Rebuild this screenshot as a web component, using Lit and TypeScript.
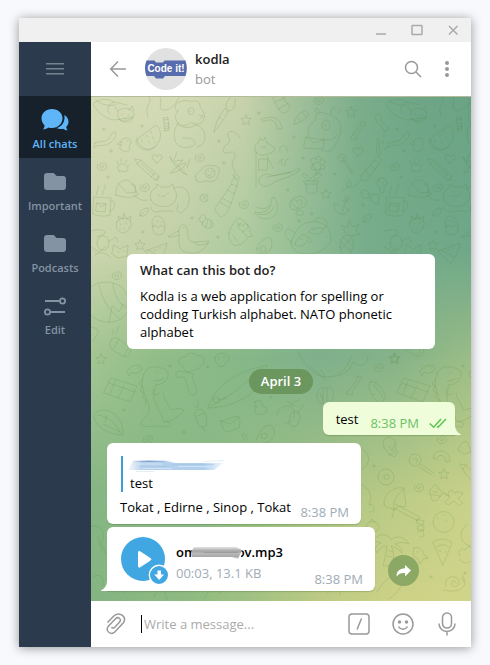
import { LitElement, html, svg, css } from "lit";
import { customElement } from "lit/decorators.js";

/* Small repeated doodles: star, heart, spiral, dot, bone, candy, leaf */
const STAR = "M0-5l1.5 3.2 3.6.4-2.7 2.5.8 3.6L0 3l-3.2 1.7.8-3.6-2.7-2.5 3.6-.4z";
const HEART = "M0 4C-4 1-6-1-4.500-3.500-3-5-.5-4 0-2 .5-4 3-5 4.500-3.500 6-1 4 1 0 4z";
const SPIRAL = "M0 0c1-1 2 0 1.500 1C0 3-3 1-2-1-1-4 4-4 4.500 0 5 4-1 6-4 3-5 2-5 0-4-2";
const DOT = "M-1.200 0a1.200 1.200 0 1 0 2.400 0a1.200 1.200 0 1 0-2.400 0";
const LEAF = "M-4 4C-5-1-1-4 4-4 5 1 1 5-4 4L1-1";
const BONE = "M-4 5L4-5C2-8 5-10 6-8 9-9 10-6 7-5L-1 7C1 10-2 11-4 9-6 11-8 7-4 5z";

const SMALL: Array<[string, number, number]> = [
  [STAR, 49, 148], [STAR, 155, 23], [STAR, 260, 15], [STAR, 235, 97], [STAR, 10, 262], [STAR, 304, 261],
  [STAR, 353, 377], [STAR, 258, 377], [STAR, 61, 377],
  [HEART, 66, 62], [HEART, 267, 55], [HEART, 206, 107], [HEART, 152, 131],
  [SPIRAL, 11, 69], [SPIRAL, 109, 60], [SPIRAL, 54, 90], [SPIRAL, 153, 107], [SPIRAL, 187, 130],
  [SPIRAL, 228, 3], [SPIRAL, 26, 178], [SPIRAL, 57, 342], [SPIRAL, 288, 270], [SPIRAL, 351, 342], [SPIRAL, 328, 390],
  [DOT, 51, 29], [DOT, 128, 44], [DOT, 20, 54], [DOT, 17, 80], [DOT, 133, 66], [DOT, 101, 121], [DOT, 52, 135],
  [DOT, 127, 140], [DOT, 168, 16], [DOT, 203, 40], [DOT, 212, 61], [DOT, 244, 77], [DOT, 197, 93], [DOT, 221, 117],
  [DOT, 208, 124], [DOT, 272, 108], [DOT, 13, 32], [DOT, 33, 313], [DOT, 79, 269], [DOT, 93, 335], [DOT, 117, 270],
  [DOT, 283, 369], [DOT, 76, 376], [DOT, 180, 300], [DOT, 340, 480], [DOT, 374, 476],
  [LEAF, 53, 115], [LEAF, 276, 121],
  [BONE, 266, 33], [BONE, 262, 288],
];

const DOODLES: string[] = [
  /* sleeping fox */
  "M3 6C8 2 17 1 23 5L36 8M2 7C6 15 14 22 24 23L42 20C37 24 30 26 28 22M5 3C10 8 18 9 25 8M23 5c-6 2-8 8-4 12M27 14c5-5 14-3 16 3l-2 6c-5 4-12 2-14-3zM27 14l-3-4M38 13l3-4 2 5M31 17h1M37 18h1M33 21l2 1",
  "M58 0c3 4-1 7-2 11-1 4 2 7 0 9",
  "M69 0c3 7-3 12 3 13s12-4 16-13",
  /* wavy scarf and chick */
  "M4 46c6-3 10 1 15-6 2-4 5-8 6-3 0 5-6 10-11 11-5 1-9 0-10 2s-2 0 0-4z",
  "M30 45c0-5 9-6 10 0 0 3-3 4-2 5 4 5-8 6-9 1-1-3 3-3 1-6zm-1 0l-3 2 4 1M36 44h1",
  /* watermelon */
  "M46 42L65 28c8 6 5 21-6 24-6 1-12-4-13-10zM45 43c1 10 13 14 20 6M60 34v2M62 40v2M56 38v2M51 43v2M58 44v2M64 45v1",
  /* candy */
  "M73 23l4-1 1 9-4 1zM73 23l-1-2 5-1v2M74 32l-1 2 5-1v-2M74 26l4 1M74 29l4 1",
  /* puppy */
  "M87 14c-5-1-3-9 2-9 3-2 9-2 12 0 3-3 9 0 8 5 4 4 6 10 3 14-2 4-9 4-12 1-3 4-9 5-13 1-4-5-3-9 0-12zM87 26c-4 6-5 14-2 20 4 6 15 6 19 1 0-7-8-6-13-6M104 28c5 0 10 5 10 12 0 6-3 9-8 10M97 14a3 3.500 0 1 0 6 0a3 3.500 0 1 0-6 0M99 14h1M108 18l4 1-3 3M86 27c6 4 13 5 18 1",
  /* paint brush */
  "M123 35c2-9 5-18 12-24l2 3c-3 8-9 15-14 21zM135 11c-1-7 4-9 7-14M137 14c6 0 8-6 7-12M128 20l2 2",
  /* paw */
  "M28 74c-3-4 0-7 3-7s8 3 5 7c-2 2-6-1-8 0zM27 67l-1-3M30 65v-3M34 66l2-3M37 69l2-1",
  /* pencil */
  "M44 62l6 1 18 16-4 4L47 68zM50 63l-4 4M64 76l-4 4M68 79l-1 4-3 0M50 66l13 12",
  /* aeroplane */
  "M79 60c2 4 10 10 17 18-7-3-14-10-17-18zM80 75c5-5 11-9 15-9-2 5-8 9-15 10zM83 63l3-8M96 71l3-9M84 64l8-1-5 5",
  /* fried egg */
  "M105 83c-3-7 4-7 6-11 4-6 10-3 14-3 5 2 3 7 2 10-1 5-6 6-11 5-4 0-9 3-11-1zM114 76a5 5 0 1 0 10 0a5 5 0 1 0-10 0M116 77c1 3 4 2 5-1M117 74h1M121 74h1",
  /* curled snake */
  "M149 41c-5-9-14-8-12-2 2 5 2 6-2 9-3 3-5 9 1 8 6-2 9-1 8 4-2 4-4 8-2 11 2 4 3 5 1 9M141 78l7 5M146 77l3 5",
  /* mouse */
  "M25 98c-1-9 4-14 10-15 5 0 9 7 12 15-7 4-16 2-22 0zM27 86l9 10 9-1M41 87c5-1 4 9 2 10M43 98c6 5 8 6 13 5",
  /* cat */
  "M60 103c-2-6 1-11 5-12l1-4 4 3h8l4-3 1 5c5 6 2 13-3 16-6 3-17 2-20-5zM83 91c7-3 14 0 15 8 1 8-2 13-8 17l-4-2 1-7M60 110c-1 5 7 6 10 4h12M67 98l2 1M76 97l2-1M71 99l2 1 1-2",
  /* bottle */
  "M125 115c-3-3 2-8 4-11 3-5 8-10 11-17l6 2c-3 8-4 13-7 20-2 5-4 9-9 11zM140 86l3-5 4 3-1 5M131 101l9 5M129 105l8 5M136 93l8 4",
  /* mug */
  "M3 100l17 1-1 17c-5 2-13 1-17-1zM20 104c4-3 6 9-1 10M6 106l9 1-1 8-9-1zM6 106l4 4 5-3M6 98c-2-4 3-5 1-9M12 98c-2-4 4-6 2-11",
  /* strawberry */
  "M26 125c2-5 11-5 14 0 1 5-2 9-7 11-7-1-9-6-7-11zM28 123l-1-4 5 3 1-6 3 6 4-3-1 5M30 127v1M35 126v1M33 131v1M38 130v1M29 131v1",
  /* hatching chick */
  "M62 129c-3-5 1-10 5-10s7 6 7 11c0 5-2 8-7 8-5-1-6-6-5-9zM62 130l3-2 2 3 3-3 4 3M66 124h1M70 125h1",
  /* bee, ball */
  "M109 101a4 4 0 1 0 8 0a4 4 0 1 0-8 0M111 98l5 6M116 98l-5 5",
  "M109 121c1-6 7-3 5 1 5-1 9 3 8 7-5 5-10 1-11-4-5-1-4-4-2-4zM113 123l-2 5M117 123l-2 7M120 124v6",
  /* duck */
  "M88 138c-1-5 0-10 4-10 5 0 4 5 5 9 0 5 1 8 6 8l15-1c-3 6-7 11-14 12-8 1-16-2-16-9zM88 134c-4 1-9 4-11 6 4 0 8-1 11-2M103 145c4 5 9 3 14 1M92 131h1",
  /* fish with hearts */
  "M138 136c2-8 8-15 11-15 6 5 11 9 10 14l3 4-5 1c-3 6-10 10-15 8-3-4-5-8-4-12zM142 138l4 6M146 125l3 4M152 136l4 3",
  /* monkey and kittens */
  "M1 134c8-3 16 0 12 3l-7 3M6 146a5 6 0 1 0 12 0a5 6 0 1 0-12 0M0 150l8 5 6-5M23 148l6 4 8-4-1 11-9 2-6-4zM4 158c5-4 12-2 15 2M18 144l7-4 2 5M27 155h1M33 154h1",
  /* pizza */
  "M54 154l22-8c-1 6-4 14-9 20zM57 153l13 7M63 153h2M68 151h2",
  /* barrel */
  "M182 0c2 7 5 12 9 16 4 0 8-3 8-7-4-3-6-7-7-10M184 5l10-4M187 12l11-6",
  /* rainbow */
  "M172 25c8-5 14-1 14 7l5 0c-1-12-11-14-20-10z",
  /* marker */
  "M203 27c1-6 6-12 11-14l4 4c-3 5-8 9-15 10zM211 15l4 5M207 21l3 4",
  /* dog with letter */
  "M218 39c-3-6 1-12 6-15 1-4 2-8 4-9 6 1 18 4 21 11 3 6-1 19-8 25M226 17c-3-5-1-7 1-5l2 4M240 17c-1-6 2-8 4-5M231 28a4 5 0 1 0 8 0a4 5 0 1 0-8 0M215 40l18 3-1 9-19-1zM215 40l8 6 10-3M232 42c6 2 12 0 14-4M230 53c8 3 14 0 15-4M247 16l2-3M234 27v2",
  /* swirl */
  "M285 18c4-4 6 1 5 5 0 4 7 4 7 10l-4 2c1-5-7-7-8-12z",
  "M286 42c4-1 3 5 2 9l2 6-3 1c-4-6 1-10-1-16zM293 37v4M292 44v3M294 51v2",
  /* llama with guitar */
  "M165 55c-3-4 0-9 3-10l1-4 3 3 2-4 2 6 7 4c2 4-3 7-7 7-3 2-7 2-11-2zM165 55v35M176 59l6 12M168 62h9l-1 11h-8zM168 84c1-8 10-8 13-5l16-3c8-3 10-5 12-4-1 4-9 6-12 8l-14 5c-5 6-15 6-15-1zM176 80l24-5M170 50h5",
  /* notes */
  "M189 55c-2-8 8-9 7 0M188 66c2-6 6-5 2-1l1 3M194 69c-1-8 4-6 4-8",
  /* flower pot */
  "M222 69a4 4 0 1 0 8 0a4 4 0 1 0-8 0M222 67c-6-5 1-8 3-4 0-6 6-5 4 1 5-4 7 2 2 4 6 1 2 7-2 3 1 6-5 6-4 1-5 3-7-2-3-5zM226 75l-4 10M213 84h15l-2 3h-12zM215 87l1 8c3 2 7 2 10 0v-8M218 84c-8-5-8-9-4-7l6 5c2-6 10-6 11-4l-7 6",
  /* lollipop */
  "M247 61a4 4 0 1 0 8 0a4 4 0 1 0-8 0M250 61c3-4 4 4 1 3M253 65l8 12M255 64l7 12",
  /* firecracker */
  "M270 79l17-20 4 4-15 20c-4 2-7 0-6-4zM275 73l4 6M280 68l4 5M284 63l4 4M270 83c-4 6-9 8-14 7-2-5 3-8 4-4 1 3-5 7-9 8",
  /* mushroom */
  "M286 88c-2-6 5-10 9-5 3 4 1 6-2 6v6c-3 2-5 0-4-5zM288 82v3M292 85v2",
  /* bananas */
  "M181 101l-2 9c-4 5-10 7-15 5 2 8 15 9 20 3 4-5 3-10 0-17zM179 108c-3 4-8 5-14 2M183 110c-3 7-10 9-16 7",
  /* thought bubble */
  "M199 109c-2-8 9-12 15-8 4 3 1 9-4 10-5 3-10 2-11-2zM205 116a4 2.500 0 1 0 8 0a4 2.500 0 1 0-8 0",
  /* anchor */
  "M254 101a2 2 0 1 0 4 0a2 2 0 1 0-4 0M255 103l-4 13M251 103l7 2M243 107c0 10 10 14 15 6M243 107l4 1M258 113l-3-2",
  /* bow */
  "M271 93c5-1 7 3 8 5 3-1 6-1 9 0l-1 9c-4 0-7-3-8-6-3 1-7 0-8-2zM277 98l4 3",
  /* panda */
  "M200 145c4-11 10-20 21-20 11-2 19 7 19 16 0 10-11 13-18 16-12 1-21-2-22-12zM201 145c-8-4-9-12-3-13l5 3M224 124c-1-5 11-5 12 2 0 4-1 5-3 5M204 147c1-7 10-13 13-6 0 6-9 12-13 6zM218 135c2-6 14-5 15-2-4 4-10 6-15 2zM209 142h2M222 133h2M218 140l2 1M221 144l-3 2",
  /* avocado */
  "M166 152c1-6 6-10 12-12 4 2 4 12-1 15-5 4-12 2-11-3zM169 152a3 3 0 1 0 6 0a3 3 0 1 0-6 0",
  /* pineapple */
  "M249 150c0-6 3-12 7-12 5-1 8 6 6 12-2 6-4 8-7 8s-6-3-6-8zM250 145l10 10M252 140l10 9M260 141l-10 11M255 137l-5-9 6 3 2-8 4 7 6-3-3 7 4 3-9 2",
  /* beach ball */
  "M0 190c8-7 25-7 33 3 7 9 6 24-3 29-11 6-24 3-30-4M8 188c3 13 8 24 20 33M22 186c1 12 5 19 13 26M18 226l3-17 7 6 4-8 8 7 4-8 2 16",
  /* flashlight */
  "M20 243c4-3 6-3 9 0l10 8c2 3-1 8-5 9l-11-6c-4-2-5-8-3-11zM28 242l-6 10M38 250l-5 9M22 233v4M28 229l-3 7M0 230c12 2 6 8 2 14",
  /* seeds, fish */
  "M37 273c3-4 9-6 13-4l1 3c-3 5-8 5-11 3l-2 4-2-4zM47 271h1",
  /* dinosaur */
  "M53 277c2-7 10-9 17-6 5 0 8 4 7 8-1 6-8 9-13 9 1 9-4 9 1 19 3 6 6 13 8 18M53 277c-5 12 2 22 5 32 3 10-9 12-8 19 5 3 12 1 16 1l12 1c3-3 1-5-3-6M73 325c8 0 18-8 20-12-7-4-13 2-14-1-3-8-6-9-7-16M63 292c-3 4 0 9 5 4M66 276h1M63 284c4 0 8-1 10-3M51 283l-3 4 3 2-2 5 4 2-2 4 4 3-1 5",
  /* chef hat and brush */
  "M90 268c-5-3-1-9 4-8 2-5 10-5 12-1 7-3 10 8 4 10-2 4-7 3-8 5l-7 1-3-5zM90 280c-5 3-8-6-1-6l14 3-2 3 5 14c0 4-7 6-8 1l-4-14z",
  /* mushroom */
  "M124 261c2-7 13-6 14 0 0 4-3 3-4 5 1 4-6 5-7 1-2-2-4-2-3-6zM128 260v2M133 259v2",
  /* surfboard */
  "M117 311c5-18 22-35 59-43-2 20-22 42-59 43zM120 309c19-9 36-24 52-39M127 303l8-2M122 303a3 3 0 1 0 6 0a3 3 0 1 0-6 0",
  /* picture */
  "M20 281l26 8-7 16-26-9zM18 286l26 9M24 284l-5 13M33 289l-6 12",
  /* pizza slice */
  "M3 320c0-7 8-8 15-6 9 3 15 13 14 24-12 0-22-5-27-13zM7 318c10 1 19 9 22 18M16 318l-2 7M12 327l18 8",
  /* rocket pop */
  "M103 316c3-6 10-4 12 2l1 10c-3 3-7 2-9-1zM111 330l3 5M103 308l3 3M107 305v5M106 319l8-3",
  /* chick, letter */
  "M164 305c3-3 8-1 7 3 2 4 7 1 4 7-4 4-13 3-11-3 3-2 0-4 0-7zM162 309l3 1",
  "M130 324l13-4c5-2 6 1 6 5l-1 6-13 4c-3-3-5-6-5-11zM130 324l9 3 9-7",
  /* small eggs and pod */
  "M186 318c0-8 11-12 16-6 4 6 0 15-8 14M154 344l-3-6c2-3 5 1 5 5M165 344c2-7 9-19 16-15 6 6 0 17-8 17M170 339a3 3 0 1 0 6 0a3 3 0 1 0-6 0",
  /* mermaid tail */
  "M207 255c7 13 16 24 27 25 17-1 24-4 28-15 8 6 14 4 15-6M220 270l15 13M234 280l-4-7M247 277c8-4 11-13 14-19",
  /* shell */
  "M227 303c-4-8 3-15 9-12 7-3 8 7 5 12l-3 4h-7zM232 292v13M236 291v14M229 296l3 8",
  /* rocket */
  "M279 285c7-2 13 7 16 16l-6 5c-7-4-14-14-10-21zM283 288l10 14M291 306l4 3M284 297l-3 1",
  /* palm sprout */
  "M199 320a5 6 0 1 0 9 4a5 6 0 1 0-9-4M200 309c2-7 8-4 9-7M207 317l6-10M196 304l7 5",
  /* light bulb */
  "M293 350c-3-7 3-12 8-9 5 2 3 8 4 13l-6 4zM298 357l6 3 3-6M298 349l3 5 2-6",
  /* lollipop on the right */
  "M318 363a6 6 0 1 0 12 0a6 6 0 1 0-12 0M322 363c2-5 7 0 3 3M329 367l14 9M328 370l13 8",
  /* arch */
  "M342 361c1-9 16-11 17 3l-4 1c-1-9-8-8-9-3z",
  /* ring and onion */
  "M287 380a8 8 0 1 0 16 0a8 8 0 1 0-16 0M293 380a2.500 2.500 0 1 0 5 0a2.500 2.500 0 1 0-5 0",
  "M271 352c9 5 9 15 0 20M271 388c11 5 9 15 7 20 7-2 7 8 1 7",
  /* umbrella */
  "M293 407c-1-10 9-18 20-16-1 6 3 12 1 19-6-2-9 1-11 3-5-3-10-2-10-6zM303 413c-2-9 4-16 10-22M301 421l2-8M304 407l25 13-2 4-24-13",
  /* muffin */
  "M339 397c-2-5 3-6 4-9 2-1 5 2 4 4 5 1 5 5 3 7zM339 397l2 6c4 2 7 0 8-4M342 395h5",
  /* gingerbread */
  "M358 399c-3-5 3-8 5-3 4-2 7-1 9 0-1 4-4 4-5 5l5 5-4 3-5-5-6 4-3-3 5-5-6-4z",
  /* crayon */
  "M369 367l6 1 10 11v8l-9-8zM375 368l-4 5M367 353c2-7 7-11 10-7l3 9-6 2z",
  /* bowling ball */
  "M342 425a10.500 10.500 0 1 0 21 0a10.500 10.500 0 1 0-21 0M346 421h1M352 418h1M355 424h1",
  /* tomato */
  "M275 430c0-7 12-8 13 0 0 6-11 7-13 0zM278 425l3-3 3 4",
  /* palm tree */
  "M283 443c5-8 15-6 17 0 6-6 15-2 18 4-6-2-10-2-14 0 5 2 7 6 7 9-5-5-8-6-11-7 4 6 3 14 0 20h-8c2-8 3-14 4-20-5 0-8 3-10 7-3-5-1-8 4-10-4-2-7-2-10-1zM297 453l5 2M296 459l5 1",
  /* small fish */
  "M323 451c4-3 9 2 10 7l4 3-5 1-3 5-2-5c-5-2-6-6-4-11zM326 455h1",
  /* pizza on the right */
  "M342 445c5-4 15-4 19 1l-9 22zM345 450c5-3 9-3 13 0M348 454h2M354 455h1",
  /* moon and cloud */
  "M376 428c-11 7-6 21 5 21M369 459c-4-6 3-9 5-6 3-7 10-1 7 3M369 462c2 5 8 5 11 2",
  /* snail */
  "M352 493c10 2 18 2 22-6l-3-6M355 489c-3-8 7-12 12-7 4 6-3 10-6 6-2-4 3-6 4-2M374 485l-2-6",
  /* streamer */
  "M326 422l7 2-1 4-6-2zM327 429h6v4h-6zM327 435l5-2 1 6-4 1",
  /* crab and tentacles near the bottom edge */
  "M0 430c10-5 16 8 10 15l5 12M7 440l4 14M2 480c8-6 13 4 9 9M15 491c7-4 12-3 18 5M63 500c3-10 12-8 13 2M114 501c5-12 10-10 16-4M236 497c6-10 14-6 13 1M286 495c6-12 15-14 22-26l8 4c-1 12-10 24-18 29",
];

@customElement("chat-wallpaper")
class ChatWallpaper extends LitElement {
  static styles = css`
    :host { display: block; overflow: hidden; }
    .tone, .doodles { position: absolute; inset: 0; width: 100%; height: 100%; }
    .t5 { background: linear-gradient(90deg, #84b582, #8ebb82 25%, #a1c283 42%, #bfcb85 62%, #cdd287 80%, #d1d58b); }
    .t4 {
      background: linear-gradient(90deg, #85b683, #8ab985 30%, #9bbf85 50%, #b4c885 72%, #c9d189);
      mask-image: linear-gradient(#000 79%, transparent);
    }
    .t3 {
      background: linear-gradient(90deg, #a3c592, #90bd88 17%, #86b788 40%, #7fb08b 60%, #86b389 80%, #9bbd86);
      mask-image: linear-gradient(#000 52%, transparent 79%);
    }
    .t2 {
      background: linear-gradient(90deg, #cbd5ac, #c3d1a8 20%, #adcba0 40%, #98c097 53%, #78ad8b 72%, #6fa889);
      mask-image: linear-gradient(#000 31%, transparent 52%);
    }
    .t1 {
      background: linear-gradient(90deg, #d4dab5, #d3dab5 22%, #c8d2ab 40%, #a2c09b 54%, #7dad8b 70%, #6fa687 85%, #6aa385);
      mask-image: linear-gradient(#000, transparent 31%);
    }
    .doodles { fill: none; stroke: #4c7a30; stroke-opacity: 0.17; stroke-width: 1; stroke-linecap: round; stroke-linejoin: round; }
  `;
  render() {
    return html`
      <div class="tone t5"></div><div class="tone t4"></div><div class="tone t3"></div>
      <div class="tone t2"></div><div class="tone t1"></div>
      <svg class="doodles" viewBox="0 0 380 505" preserveAspectRatio="xMinYMin slice" aria-hidden="true">
        <g id="tile">
          ${DOODLES.map((d) => svg`<path d=${d} />`)}
          ${SMALL.map(([d, x, y]) => svg`<path d=${d} transform="translate(${x} ${y})" />`)}
        </g>
        <svg x="293" y="0" width="87" height="335" viewBox="0 0 87 335"><use href="#tile" /></svg>
      </svg>`;
  }
}

@customElement("app-root")
class AppRoot extends LitElement {
  static styles = css`
    :host {
      display: flex; box-sizing: border-box; min-height: 100vh; padding: 18px 19px;
      background: #f8f9fc; color: #000; font: 13px/18px "Open Sans", "Noto Sans", sans-serif;
    }
    * { box-sizing: border-box; }
    button { margin: 0; padding: 0; border: 0; background: none; font: inherit; color: inherit; display: grid; place-items: center; }
    svg { display: block; }
    p, h1, h2 { margin: 0; font: inherit; }
    .line { fill: none; stroke: currentColor; stroke-width: 1.500; }
    .window { flex: 1; display: flex; flex-direction: column; min-width: 0; background: #fff; box-shadow: 0 1px 10px rgba(0, 0, 0, 0.4); }
    .titlebar { height: 24px; background: #f0f0f0; display: flex; justify-content: flex-end; color: #aaa; }
    .titlebar button { width: 36px; height: 24px; }
    .body { flex: 1; display: flex; min-height: 0; }
    .rail { width: 72px; flex: none; background: #2b3a4c; color: #8393a3; display: flex; flex-direction: column; }
    .menu { height: 54px; color: #768390; }
    .tab { height: 62px; padding-top: 12px; display: flex; flex-direction: column; align-items: center; gap: 5px; font-size: 11px; line-height: 14px; font-weight: 600; }
    .tab.active { background: #17212b; color: #5eb5f7; }
    .main { flex: 1; min-width: 0; display: flex; flex-direction: column; }
    .header { height: 54px; padding: 0 7px 0 10px; display: flex; align-items: center; color: #999; }
    .header button { width: 34px; height: 40px; }
    .avatar { margin: 0 8px 0 10px; }
    .badge-text { font: bold 10px "Liberation Sans", sans-serif; fill: #fff; }
    .peer { flex: 1; display: flex; flex-direction: column; gap: 2px; }
    .peer h1 { color: #222; font-weight: 600; }
    .chat { flex: 1; position: relative; padding: 16px 16px 10px; display: flex; flex-direction: column; justify-content: flex-end; }
    chat-wallpaper { position: absolute; inset: 0; z-index: 0; border-top: 1px solid #b4bb9a; }
    .chat > :not(chat-wallpaper) { position: relative; }
    .about { align-self: center; width: 308px; max-width: 100%; padding: 7px 13px 8px; background: #fff; border-radius: 6px; display: flex; flex-direction: column; gap: 8px; }
    .about h2 { font-weight: 600; color: #222; }
    .date { align-self: center; margin: 20px 0 8px; height: 25px; padding: 0 12px; line-height: 25px; border-radius: 13px; background: #6b975f; color: #fff; font-weight: 600; }
    .time { color: #a0acb6; line-height: 16px; }
    .out { align-self: flex-end; height: 33px; padding: 0 8px 0 13px; display: flex; background: #effddb; border-radius: 6px 6px 0 6px; box-shadow: 0 1px 1px rgba(70, 110, 50, 0.3); }
    .out p { padding-top: 8px; margin-right: 12px; }
    .out .time { padding-top: 13px; margin-right: 10px; color: #6cc264; }
    .out .checks { margin-top: 15px; color: #5dc452; }
    .tail { position: absolute; bottom: 0; fill: #fff; }
    .out .tail { left: 100%; fill: #effddb; }
    .in .tail { right: 100%; }
    .in { align-self: flex-start; background: #fff; border-radius: 6px; box-shadow: 0 1px 1px rgba(70, 110, 50, 0.3); }
    .reply { margin-top: 8px; width: 254px; padding: 13px 12px 4px 13px; }
    .quote { margin-left: 1px; height: 36px; padding-left: 5px; border-left: 2px solid #3d9dd6; display: flex; flex-direction: column; justify-content: space-between; }
    .quote p { padding-left: 2px; }
    .row { display: flex; justify-content: space-between; margin-top: 6px; }
    .row .time { padding-top: 6px; }
    .audio { margin-top: 3px; width: 268px; height: 64px; padding: 10px 12px 4px 14px; border-radius: 6px 6px 6px 0; display: flex; }
    .play { position: relative; width: 44px; height: 44px; }
    .play .disc { position: absolute; left: 0; top: 0; }
    .info { flex: 1; margin-left: 11px; display: flex; flex-direction: column; gap: 3px; padding-top: 6px; }
    .file { position: relative; width: 107px; display: flex; justify-content: space-between; font-weight: 600; }
    .file svg { position: absolute; left: 14px; top: 1px; }
    .info .time { line-height: 18px; }
    .audio > .time { align-self: flex-end; line-height: 16px; }
    .share { position: absolute; left: calc(100% + 13px); top: 28px; width: 31px; height: 31px; border-radius: 50%; background: #8ba865; color: #fff; }
    .composer { height: 46px; padding: 0 2px 0 8px; display: flex; align-items: center; color: #999; }
    .composer button { width: 44px; height: 46px; }
    .composer .attach { width: 34px; }
    .caret { width: 1px; height: 18px; margin: 0 2px 0 8px; background: #000; }
    input { flex: 1; min-width: 0; border: 0; outline: 0; padding: 0; background: none; font: inherit; color: #000; }
    input::placeholder { color: #aaa; opacity: 1; }
  `;

  private folder = html`<svg width="28" height="24" viewBox="0 0 28 24" fill="currentColor"><path d="M3 6a3 3 0 0 1 3-3h5.500c1.500 0 2 .5 3 1.700C15 5.700 15.700 6 17 6h5a3 3 0 0 1 3 3v8a3 3 0 0 1-3 3H6a3 3 0 0 1-3-3z"/></svg>`;

  private tab(icon: unknown, label: string, active = false) {
    return html`<button class="tab ${active ? "active" : ""}">${icon}<span>${label}</span></button>`;
  }

  render() {
    return html`
      <div class="window">
        <div class="titlebar">
          <button aria-label="Minimize"><svg class="line" width="12" height="12" viewBox="0 0 12 12"><path d="M1 10h10"/></svg></button>
          <button aria-label="Maximize"><svg class="line" width="12" height="12" viewBox="0 0 12 12"><rect x="1" y="1.500" width="10" height="9" rx=".5"/></svg></button>
          <button aria-label="Close"><svg class="line" width="12" height="12" viewBox="0 0 12 12"><path d="M2 2l8.500 8.500M10.500 2L2 10.500"/></svg></button>
        </div>
        <div class="body">
          <nav class="rail">
            <button class="menu" aria-label="Menu"><svg width="18" height="12" viewBox="0 0 18 12" fill="currentColor"><path d="M0 0h18v1.500H0zM0 5h18v1.500H0zM0 10h18v1.500H0z"/></svg></button>
            ${this.tab(html`<svg width="28" height="24" viewBox="0 0 28 24" fill="currentColor"><path d="M11 1c6 0 10.500 4 10.500 9.300S17 20 11 20c-1.300 0-2.500-.2-3.600-.6C6 20.600 3.800 21.500 2 21.300c1-1 1.600-2.600 1.500-4C1.600 15.500.5 13 .5 10.300.5 5 5 1 11 1z"/><path d="M23.300 7c2.700 1.600 4.200 4 4.200 6.700 0 2-.8 3.700-2.200 5 0 1.300.6 2.600 1.400 3.500-1.800.2-3.500-.5-4.600-1.500-2 .7-4.700.4-6.600-.6C20.500 19 24.600 14 23.300 7z"/></svg>`, "All chats", true)}
            ${this.tab(this.folder, "Important")}
            ${this.tab(this.folder, "Podcasts")}
            ${this.tab(html`<svg width="28" height="24" viewBox="0 0 28 24" fill="none" stroke="currentColor" stroke-width="1.800"><path d="M4 7h14.500M9.500 18H24"/><circle cx="21.500" cy="7" r="2.600"/><circle cx="6.500" cy="18" r="2.600"/></svg>`, "Edit")}
          </nav>
          <main class="main">
            <header class="header">
              <button aria-label="Back"><svg class="line" width="18" height="18" viewBox="0 0 18 18"><path d="M17 9H2M9 1.500L1.700 9 9 16.500"/></svg></button>
              <svg class="avatar" width="42" height="42" viewBox="0 0 42 42" role="img" aria-label="kodla">
                <circle cx="21" cy="21" r="21" fill="#e1e1e1"/>
                <path fill="#566cac" d="M1.500 12.500h8l1.500 2h7l1.500-2h21c1.700 5.500 1.700 10 0 15.500H20l-2 2.500h-7L9 28H1.500c-2-5-2-10.500 0-15.500z"/>
                <text class="badge-text" x="21" y="24" text-anchor="middle">Code it!</text>
              </svg>
              <div class="peer"><h1>kodla</h1><p>bot</p></div>
              <button aria-label="Search"><svg class="line" width="18" height="18" viewBox="0 0 18 18"><circle cx="7.500" cy="7.500" r="6"/><path d="M12 12l5 5"/></svg></button>
              <button aria-label="More"><svg width="4" height="16" viewBox="0 0 4 16" fill="currentColor"><circle cx="2" cy="2" r="2"/><circle cx="2" cy="8" r="2"/><circle cx="2" cy="14" r="2"/></svg></button>
            </header>
            <section class="chat">
              <chat-wallpaper></chat-wallpaper>
              <article class="about">
                <h2>What can this bot do?</h2>
                <p>Kodla is a web application for spelling or codding Turkish alphabet. NATO phonetic alphabet</p>
              </article>
              <div class="date">April 3</div>
              <article class="out">
                <p>test</p><span class="time">8:38 PM</span>
                <svg class="checks line" width="18" height="12" viewBox="0 0 18 12"><path d="M.7 6.500l4 3.700L12 2M8 9.500l1 .8L17 2"/></svg>
                <svg class="tail" width="6" height="10" viewBox="0 0 6 10"><path d="M0 0c0 4 2 7.500 6 9.500V10H0z"/></svg>
              </article>
              <article class="in reply">
                <div class="quote">
                  <svg width="100" height="16" viewBox="0 0 100 16" aria-hidden="true">
                    <defs>
                      <linearGradient id="smear" x1="0" x2="1"><stop offset="0" stop-color="#c3d9ee" stop-opacity=".2"/><stop offset=".15" stop-color="#b5d0ea"/><stop offset=".8" stop-color="#b0d0ee"/><stop offset="1" stop-color="#c3ddf3" stop-opacity=".3"/></linearGradient>
                      <linearGradient id="streak" gradientUnits="userSpaceOnUse" x1="4" x2="45" y1="0" y2="0"><stop offset="0" stop-color="#7fa0cf" stop-opacity="0"/><stop offset=".4" stop-color="#7fa0cf"/><stop offset="1" stop-color="#7fa0cf" stop-opacity="0"/></linearGradient>
                    </defs>
                    <path fill="url(#smear)" d="M5 5h30l13 2h47l-9 7H0z"/>
                    <path fill="url(#streak)" d="M5 4.500h40v1.500H5z"/>
                    <path stroke="#e3effa" d="M10 8h24M50 10.500h32M14 12.500h30" opacity=".6"/>
                    <path stroke="#98bfe4" d="M44 8.500h42M12 10.500h30" opacity=".4"/>
                    <path stroke="#d8e7f5" d="M76 5.500l20-1M8 15.500h18" opacity=".7"/>
                  </svg>
                  <p>test</p>
                </div>
                <div class="row"><p>Tokat , Edirne , Sinop , Tokat</p><span class="time">8:38 PM</span></div>
              </article>
              <article class="in audio">
                <svg class="tail" width="6" height="10" viewBox="0 0 6 10"><path d="M6 0c0 4-2 7.500-6 9.500V10h6z"/></svg>
                <button class="play" aria-label="Play">
                  <svg class="disc" width="48" height="48" viewBox="0 0 48 48">
                    <circle cx="22" cy="22" r="22" fill="#40a7e3"/>
                    <path d="M17.500 15v14.500c0 .8.6 1 1.300.6l10.700-7c.6-.5.6-1 0-1.500l-10.700-7c-.7-.5-1.300-.3-1.300.4z" fill="#fff" stroke="#fff"/>
                    <circle cx="38" cy="38" r="9.700" fill="#40a7e3" stroke="#fff" stroke-width="1.400"/>
                    <path d="M36.500 33.500h3.500v4h3L38.200 43l-5-5.500h3.300z" fill="#fff"/>
                  </svg>
                </button>
                <div class="info">
                  <div class="file"><span>om</span><span>ov.mp3</span>
                    <svg width="54" height="18" viewBox="0 0 54 18" aria-hidden="true">
                      <defs>
                        <linearGradient id="smudge" x2="0" y2="1"><stop offset="0" stop-color="#e4e4e4"/><stop offset=".35" stop-color="#a4a4a4"/><stop offset=".55" stop-color="#b9b9b9"/><stop offset=".8" stop-color="#a8a8a8"/><stop offset="1" stop-color="#e4e4e4"/></linearGradient>
                      </defs>
                      <path fill="#fff" d="M3 0h45l3 4v10l-49 3z"/>
                      <path fill="url(#smudge)" d="M4 3h42l6 3-4 9-6-2H2L1 8z"/>
                      <path stroke="#8a8a8a" d="M14 8.500h34" opacity=".5"/>
                    </svg>
                  </div>
                  <span class="time">00:03, 13.1 KB</span>
                </div>
                <span class="time">8:38 PM</span>
                <button class="share" aria-label="Share"><svg width="15" height="12" viewBox="0 0 15 12" fill="currentColor"><path d="M9 0l6 5.500L9 11.500V8C5 7.800 2.500 8.800.7 11.500 0 7 3.500 3.500 9 3.300z"/></svg></button>
              </article>
            </section>
            <footer class="composer">
              <button class="attach" aria-label="Attach file"><svg class="line" width="20" height="22" viewBox="0 0 20 22"><path d="M1.500 9.500L7.500 3.200c5-5 13-.5 10.500 5.500-.5 1.200-1.500 2-2.500 3L9 18.700c-4 4-9.500-.3-7.200-4.700.4-.8 1-1.300 1.700-2l6-6.200c2.700-2.700 6.200.2 4.300 3L8.500 14.500c-1 1-2.500.7-3-.3"/></svg></button>
              <span class="caret"></span>
              <input type="text" placeholder="Write a message..." aria-label="Message" />
              <button aria-label="Bot commands"><svg class="line" width="22" height="22" viewBox="0 0 22 22"><rect x="1" y="1" width="20" height="20" rx="3"/><path d="M13.500 5.500L9 16.500"/></svg></button>
              <button aria-label="Emoji"><svg class="line" width="22" height="22" viewBox="0 0 22 22"><circle cx="11" cy="11" r="10"/><path d="M6.500 13.500c2 3.500 7 3.500 9 0"/><circle cx="7.500" cy="9" r="1" fill="currentColor"/><circle cx="14.500" cy="9" r="1" fill="currentColor"/></svg></button>
              <button aria-label="Record voice"><svg class="line" width="18" height="24" viewBox="0 0 18 24"><rect x="4.500" y="1" width="9" height="15" rx="4.500"/><path d="M1 11.500c0 4.700 3.500 8 8 8s8-3.300 8-8M9 19.500V23.500"/></svg></button>
            </footer>
          </main>
        </div>
      </div>`;
  }
}
